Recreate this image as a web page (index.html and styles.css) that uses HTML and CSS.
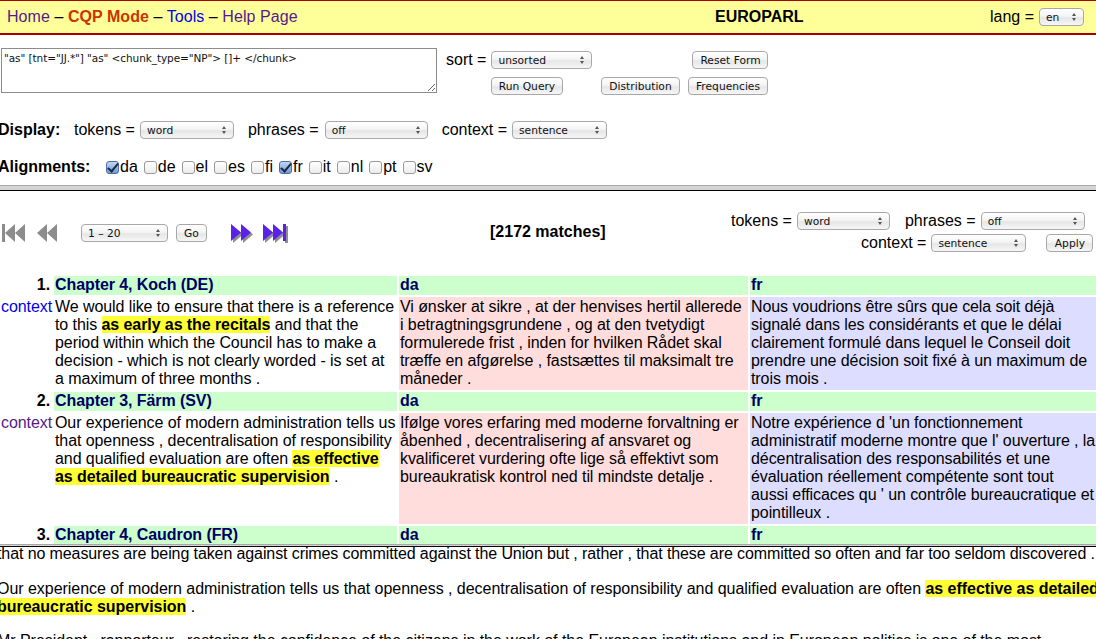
FILE: index.html
```html
<!DOCTYPE html>
<html>
<head>
    <title>EUROPARL - CQP Mode</title>
    <link rel="stylesheet" href="styles.css">
</head>
<body>
    <div class="header">
        <div class="nav-links">
            <a class="visited" href="#">Home</a> &ndash; <b class="current">CQP Mode</b> &ndash; <a href="#">Tools</a> &ndash; <a class="visited" href="#">Help Page</a>
        </div>
        <div class="corpus">EUROPARL</div>
        <div class="lang">lang = <span class="sel sel-lang"><select><option>en</option></select></span></div>
    </div>

    <form class="query">
        <div class="query-top">
            <textarea class="cqp">"as" [tnt="JJ.*"] "as" &lt;chunk_type="NP"&gt; []+ &lt;/chunk&gt;</textarea>
            <div class="query-side">
                <div class="side-row">
                    <span class="sort-label">sort =</span>
                    <span class="sel sel-sort"><select><option>unsorted</option></select></span>
                    <button type="button" class="btn btn-reset">Reset Form</button>
                </div>
                <div class="side-row side-row2">
                    <button type="button" class="btn btn-run">Run Query</button>
                    <button type="button" class="btn btn-dist">Distribution</button>
                    <button type="button" class="btn btn-freq">Frequencies</button>
                </div>
            </div>
        </div>
        <div class="display-row">
            <b class="display-label">Display:</b>
            <span>tokens =</span>
            <span class="sel sel-tokens"><select><option>word</option></select></span>
            <span class="after-sel">phrases =</span>
            <span class="sel sel-phrases"><select><option>off</option></select></span>
            <span class="after-sel">context =</span>
            <span class="sel sel-context"><select><option>sentence</option></select></span>
        </div>
        <div class="align-row">
            <b class="align-label">Alignments:</b>
            <label><input type="checkbox" checked>da</label>
            <label><input type="checkbox">de</label>
            <label><input type="checkbox">el</label>
            <label><input type="checkbox">es</label>
            <label><input type="checkbox">fi</label>
            <label><input type="checkbox" checked>fr</label>
            <label><input type="checkbox">it</label>
            <label><input type="checkbox">nl</label>
            <label><input type="checkbox">pt</label>
            <label><input type="checkbox">sv</label>
        </div>
    </form>

    <div class="splitter"></div>

    <div class="results">
        <div class="pager">
            <div class="pager-left">
                <svg class="icon-first" width="24" height="22" viewBox="0 0 24 22">
                    <g fill="#8c8c8c"><rect x="0" y="2" width="3" height="18"/><polygon points="13,2 13,20 3,11"/><polygon points="23,2 23,20 13,11"/></g>
                </svg>
                <svg class="icon-prev" width="22" height="22" viewBox="0 0 22 22">
                    <g fill="#8c8c8c"><polygon points="11,2 11,20 1,11"/><polygon points="21,2 21,20 11,11"/></g>
                </svg>
                <span class="sel sel-page"><select><option>1 &ndash; 20</option></select></span>
                <button type="button" class="btn btn-go">Go</button>
                <svg class="icon-next" width="26" height="22" viewBox="0 0 26 22">
                    <g fill="#333" opacity=".55" transform="translate(2 2)"><polygon points="1,2 1,19 11,10.5"/><polygon points="11,2 11,19 21,10.5"/></g>
                    <g fill="#5a22e8"><polygon points="1,2 1,19 11,10.5"/><polygon points="11,2 11,19 21,10.5"/></g>
                </svg>
                <svg class="icon-last" width="28" height="22" viewBox="0 0 28 22">
                    <g fill="#333" opacity=".55" transform="translate(2 2)"><polygon points="1,2 1,19 11,10.5"/><polygon points="11,2 11,19 21,10.5"/><rect x="21" y="2" width="3" height="17"/></g>
                    <g fill="#5a22e8"><polygon points="1,2 1,19 11,10.5"/><polygon points="11,2 11,19 21,10.5"/><rect x="21" y="2" width="3" height="17"/></g>
                </svg>
            </div>
            <b class="matches">[2172 matches]</b>
            <div class="pager-right">
                <div class="pager-opts">
                    <span>tokens =</span>
                    <span class="sel sel-tokens2"><select><option>word</option></select></span>
                    <span class="after-sel2">phrases =</span>
                    <span class="sel sel-phrases2"><select><option>off</option></select></span>
                </div>
                <div class="pager-opts pager-opts2">
                    <span>context =</span>
                    <span class="sel sel-context2"><select><option>sentence</option></select></span>
                    <button type="button" class="btn btn-apply">Apply</button>
                </div>
            </div>
        </div>

        <table class="hits">
            <colgroup>
                <col class="c-num"><col class="c-src"><col class="c-da"><col class="c-fr">
            </colgroup>
            <tr class="hit-head">
                <td class="num">1.</td>
                <th>Chapter 4, Koch (DE)</th>
                <th>da</th>
                <th>fr</th>
            </tr>
            <tr>
                <td class="ctx"><a href="#">context</a></td>
                <td>We would like to ensure that there is a reference to this <span class="hl">as early as the recitals</span> and that the period within which the Council has to make a decision - which is not clearly worded - is set at a maximum of three months .</td>
                <td class="da">Vi ønsker at sikre , at der henvises hertil allerede i betragtningsgrundene , og at den tvetydigt formulerede frist , inden for hvilken Rådet skal træffe en afgørelse , fastsættes til maksimalt tre måneder .</td>
                <td class="fr">Nous voudrions être sûrs que cela soit déjà signalé dans les considérants et que le délai clairement formulé dans lequel le Conseil doit prendre une décision soit fixé à un maximum de trois mois .</td>
            </tr>
            <tr class="hit-head">
                <td class="num">2.</td>
                <th>Chapter 3, Färm (SV)</th>
                <th>da</th>
                <th>fr</th>
            </tr>
            <tr>
                <td class="ctx"><a class="visited" href="#">context</a></td>
                <td>Our experience of modern administration tells us that openness , decentralisation of responsibility and qualified evaluation are often <span class="hl">as effective as detailed bureaucratic supervision</span> .</td>
                <td class="da">Ifølge vores erfaring med moderne forvaltning er åbenhed , decentralisering af ansvaret og kvalificeret vurdering ofte lige så effektivt som bureaukratisk kontrol ned til mindste detalje .</td>
                <td class="fr">Notre expérience d 'un fonctionnement administratif moderne montre que l' ouverture , la décentralisation des responsabilités et une évaluation réellement compétente sont tout<br>aussi efficaces qu ' un contrôle bureaucratique et pointilleux .</td>
            </tr>
            <tr class="hit-head">
                <td class="num">3.</td>
                <th>Chapter 4, Caudron (FR)</th>
                <th>da</th>
                <th>fr</th>
            </tr>
        </table>
    </div>

    <div class="splitter splitter-low"></div>

    <div class="context">
        <p class="before">that no measures are being taken against crimes committed against the Union but , rather , that these are committed so often and far too seldom discovered .</p>
        <p>Our experience of modern administration tells us that openness , decentralisation of responsibility and qualified evaluation are often <span class="hl">as effective as detailed bureaucratic supervision</span> .</p>
        <p>Mr President , rapporteur , restoring the confidence of the citizens in the work of the European institutions and in European politics is one of the most</p>
    </div>
</body>
</html>
```

FILE: styles.css
```css
html, body {
    margin: 0;
    padding: 0;
    height: 100%;
    overflow: hidden;
}

body {
    font-family: "Liberation Sans", Arial, sans-serif;
    font-size: 16px;
    color: #000;
    background-color: white;
    display: flex;
    flex-direction: column;
    height: 639px;
}

a {
    color: #0000ee;
    text-decoration: none;
}

a.visited {
    color: #551a8b;
}

/* top bar */
.header {
    flex: none;
    height: 32px;
    box-sizing: content-box;
    background-color: #ffff99;
    border-top: 1px solid #aa0000;
    border-bottom: 2px solid #aa0000;
    display: flex;
    align-items: center;
    padding-left: 7px;
}

.nav-links {
    width: 708px;
    letter-spacing: 0.06px;
}

.current {
    color: #cc3300;
}

.corpus {
    font-weight: bold;
    width: 275px;
}

.lang {
    display: flex;
    align-items: center;
    white-space: nowrap;
}

/* select boxes */
.sel {
    display: inline-block;
    position: relative;
    height: 18px;
}

.sel select {
    appearance: none;
    display: block;
    width: 100%;
    height: 18px;
    margin: 0;
    padding: 0 0 0 6px;
    font-family: "DejaVu Sans", sans-serif;
    font-size: 10.7px;
    color: #111;
    border: 1px solid #a8a8a8;
    border-radius: 4px;
    background: linear-gradient(#ffffff, #f4f4f4 45%, #e6e6e6 55%, #f6f6f6);
}

.sel::before,
.sel::after {
    content: "";
    position: absolute;
    right: 8px;
    width: 0;
    height: 0;
    border-left: 2.5px solid transparent;
    border-right: 2.5px solid transparent;
}

.sel::before {
    top: 5px;
    border-bottom: 3px solid #555;
}

.sel::after {
    top: 10px;
    border-top: 3px solid #555;
}

.sel-lang { width: 45px; margin-left: 5px; }
.sel-sort { width: 101px; margin-left: 5px; }
.sel-tokens { width: 94px; margin-left: 5px; }
.sel-phrases { width: 103px; margin-left: 6px; }
.sel-context { width: 95px; margin-left: 5px; }
.sel-page { width: 87px; margin-left: 23px; }
.sel-tokens2 { width: 93px; margin-left: 5px; }
.sel-phrases2 { width: 104px; margin-left: 5px; }
.sel-context2 { width: 95px; margin-left: 5px; }

/* buttons */
.btn {
    height: 18px;
    margin: 0;
    padding: 0;
    font-family: "DejaVu Sans", sans-serif;
    font-size: 10.7px;
    color: #111;
    border: 1px solid #a8a8a8;
    border-radius: 4px;
    background: linear-gradient(#ffffff, #f4f4f4 45%, #e6e6e6 55%, #f6f6f6);
}

.btn-reset { width: 76px; margin-left: 100px; }
.btn-run { width: 72px; margin-left: 45px; }
.btn-dist { width: 79px; margin-left: 38px; }
.btn-freq { width: 80px; margin-left: 8px; }
.btn-go { width: 31px; margin-left: 8px; }
.btn-apply { width: 47px; margin-left: 20px; }

/* query form */
.query {
    flex: none;
    height: 150px;
    margin: 0;
}

.query-top {
    display: flex;
    padding: 13px 0 0 1px;
}

.cqp {
    width: 436px;
    height: 45px;
    box-sizing: border-box;
    margin: 0;
    padding: 3px 2px;
    font-family: "DejaVu Sans", sans-serif;
    font-size: 10.5px;
    letter-spacing: -0.08px;
    color: #111;
    border: 1px solid #8c8c8c;
    border-radius: 0;
    outline: none;
}

.query-side {
    margin-left: 9px;
    padding-top: 3px;
}

.side-row {
    display: flex;
    align-items: center;
    height: 18px;
}

.side-row2 {
    margin-top: 8px;
}

.display-row {
    display: flex;
    align-items: center;
    height: 18px;
    margin: 26px 0 0 -2px;
}

.display-label {
    width: 76px;
}

.after-sel {
    margin-left: 14px;
}

.align-row {
    display: flex;
    align-items: center;
    height: 18px;
    margin: 19px 0 0 -2px;
}

.align-label {
    width: 108px;
}

.align-row label {
    display: flex;
    align-items: center;
    margin-right: 6px;
}

.align-row input {
    appearance: none;
    width: 13px;
    height: 13px;
    margin: 1px 1px 0 0;
    border: 1px solid #9a9a9a;
    border-radius: 3px;
    background: linear-gradient(#ffffff, #ececec);
    position: relative;
}

.align-row input:checked {
    border-color: #4d6fa8;
    background: linear-gradient(#c3d6f2, #6f9ad8);
}

.align-row input:checked::after {
    content: "";
    position: absolute;
    left: 3px;
    top: -1px;
    width: 4px;
    height: 9px;
    border-right: 2px solid #1c2a44;
    border-bottom: 2px solid #1c2a44;
    transform: rotate(40deg);
}

/* frame borders */
.splitter {
    flex: none;
    height: 4px;
    background-color: #d4d4d4;
    border-top: 1px solid #a8a8a8;
    border-bottom: 1px solid #000;
}

.splitter-low {
    height: 1px;
}

/* results frame */
.results {
    flex: none;
    height: 353px;
    overflow: hidden;
}

.pager {
    display: flex;
    height: 83px;
}

.pager-left {
    width: 490px;
    display: flex;
    align-items: center;
    height: 84px;
    padding-left: 2px;
    box-sizing: border-box;
}

.icon-prev { margin-left: 10px; }
.icon-next { margin-left: 23px; }
.icon-last { margin-left: 6px; }

.matches {
    width: 235px;
    margin-top: 32px;
}

.pager-right {
    flex: 1;
    padding-top: 21px;
}

.pager-opts {
    display: flex;
    align-items: center;
    height: 18px;
    margin-left: 6px;
}

.after-sel2 {
    margin-left: 15px;
}

.pager-opts2 {
    margin: 4px 0 0 136px;
}

.hits {
    table-layout: fixed;
    width: 1100px;
    border-collapse: separate;
    border-spacing: 2px;
    margin: 0;
    line-height: 18px;
    letter-spacing: -0.08px;
}

.c-num { width: 50px; }
.c-src { width: 343px; }
.c-da { width: 349px; }
.c-fr { width: 350px; }

.hits td,
.hits th {
    padding: 0 1px;
    vertical-align: top;
    text-align: left;
}

.hit-head th {
    background-color: #ccffcc;
    color: #000066;
    font-weight: bold;
    padding-bottom: 1px;
}

.hits td.num {
    padding: 0 2px 0 0;
    text-align: right;
    font-weight: bold;
}

.hits td {
    padding-top: 1px;
    padding-bottom: 2px;
}

.hits td.ctx {
    padding-left: 0;
    padding-right: 0;
    text-align: right;
    white-space: nowrap;
}

.ctx a {
    margin-left: -3px;
}

.da {
    background-color: #ffdddd;
}

.hits td.fr {
    background-color: #ddddff;
    padding-right: 4.5px;
}

.hl {
    background-color: #ffff33;
    font-weight: bold;
}

/* context frame */
.context {
    flex: 1;
    overflow: hidden;
    margin-left: -3px;
    margin-top: -2px;
    line-height: 18px;
    width: 1112px;
    letter-spacing: -0.04px;
}

.context p {
    margin: 0 0 16px;
}

.context .before {
    letter-spacing: -0.1px;
    margin-bottom: 17px;
}
```
